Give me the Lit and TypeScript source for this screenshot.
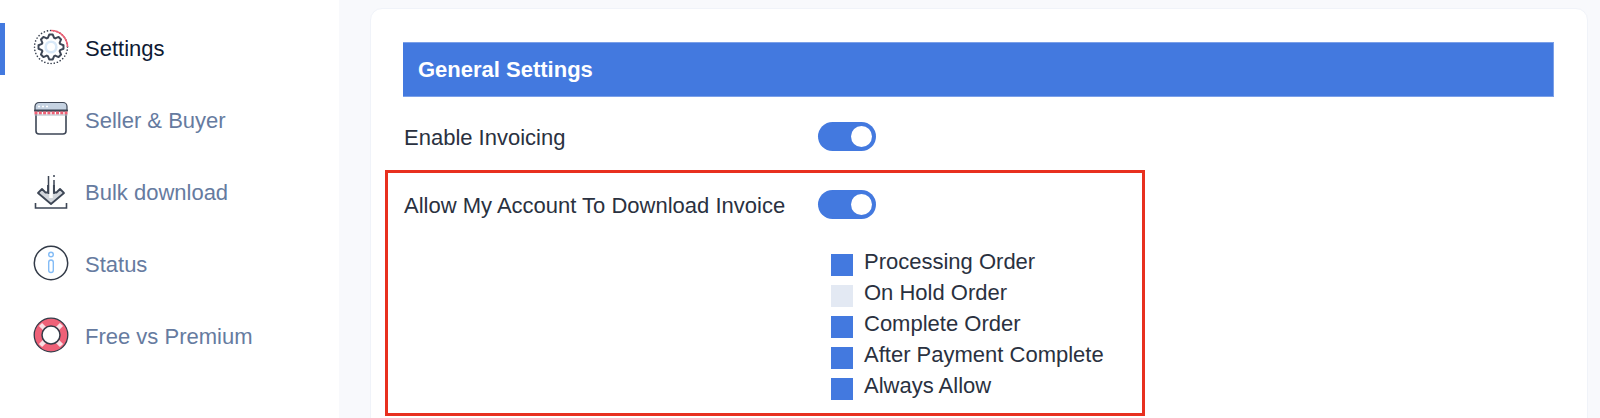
import { LitElement, html, css, svg } from "lit";
import { customElement } from "lit/decorators.js";

const dark = "#3d4655";
const gearPath = (() => {
  const teeth = 8, cx = 18, cy = 18, r1 = 9.6, r2 = 12.6;
  let d = "";
  for (let i = 0; i < teeth; i++) {
    const a = (i / teeth) * Math.PI * 2;
    const w = 0.2, s = 0.13;
    const pts = [[r1, a - w - s], [r2, a - w + 0.06], [r2, a + w - 0.06], [r1, a + w + s]];
    for (const [r, t] of pts) {
      d += `${d ? "L" : "M"}${(cx + r * Math.cos(t)).toFixed(2)} ${(cy + r * Math.sin(t)).toFixed(2)}`;
    }
  }
  return d + "Z";
})();

const icons = {
  gear: svg`<svg viewBox="0 0 36 36" width="36" height="36" fill="none">
    <circle cx="18" cy="18" r="16.5" stroke="#3a4250" stroke-width="1.6" stroke-linecap="round" stroke-dasharray="0.1 3.1"/>
    <path d="M18 1.5A16.5 16.5 0 0 1 34.5 18" stroke="#ee6075" stroke-width="1.6"/>
    <path d=${gearPath} stroke=${dark} stroke-width="2" stroke-linejoin="round" fill="#fff"/>
    <circle cx="18" cy="18" r="6.6" fill="#d9e9f8"/>
    <circle cx="18" cy="18" r="4" fill="#fff"/>
  </svg>`,
  shop: svg`<svg viewBox="0 0 36 36" width="36" height="36" fill="none">
    <path d="M3 12V30a3 3 0 0 0 3 3H30a3 3 0 0 0 3-3V12" fill="#fff" stroke=${dark} stroke-width="1.6"/>
    <path d="M2 10V5.500a4 4 0 0 1 4-4H30a4 4 0 0 1 4 4V10Z" fill="#c6d3e2" stroke=${dark} stroke-width="1.200"/>
    <path d="M5 5.500h2M9 5.500h2M13 5.500h2" stroke="#fff" stroke-width="1.600"/>
    <rect x="1" y="8.500" width="34" height="2" rx="1" fill=${dark}/>
    <path d="M1.500 12H34.500" stroke="#ee5f74" stroke-width="3" stroke-dasharray="3 1.300"/>
    <path d="M1.500 14H34.500" stroke="#aeb5c0" stroke-width="1"/>
  </svg>`,
  download: svg`<svg viewBox="0 0 36 36" width="36" height="36" fill="none">
    <path d="M15 12V19.500H12.500L9 16 5 20 18 31 31 20 27 16 23.500 19.500H21V12" fill="#d2d6dc" stroke=${dark} stroke-width="1.800" stroke-linejoin="round"/>
    <path d="M18 2V25" stroke="#fff" stroke-width="3.500"/>
    <path d="M15.500 3V21M21 2V4M21 7V21" stroke=${dark} stroke-width="1.500"/>
    <path d="M2.500 30V35H33.500V30" stroke=${dark} stroke-width="1.600"/>
  </svg>`,
  info: svg`<svg viewBox="0 0 36 36" width="36" height="36" fill="none">
    <circle cx="18" cy="18" r="16.700" stroke="#333b48" stroke-width="1.500"/>
    <circle cx="18" cy="9.500" r="2.300" stroke="#84bcf6" stroke-width="1.400"/>
    <rect x="15.700" y="15" width="4.600" height="12.500" rx="2.300" stroke="#84bcf6" stroke-width="1.400"/>
  </svg>`,
  ring: svg`<svg viewBox="0 0 36 36" width="36" height="36" fill="none">
    <circle cx="18" cy="18" r="16.800" fill="#ef6178"/>
    <path d="M7.500 7.500 13 13M28.500 7.500 23 13M7.500 28.500 13 23M28.500 28.500 23 23" stroke="#fbdfe4" stroke-width="4.500"/>
    <circle cx="18" cy="18" r="16.800" stroke="#333b48" stroke-width="1.300"/>
    <circle cx="18" cy="18" r="9" fill="#fff" stroke="#333b48" stroke-width="1.500"/>
  </svg>`,
};

const nav = [
  { label: "Settings", icon: icons.gear, active: true },
  { label: "Seller & Buyer", icon: icons.shop },
  { label: "Bulk download", icon: icons.download },
  { label: "Status", icon: icons.info },
  { label: "Free vs Premium", icon: icons.ring },
];

const options = [
  { label: "Processing Order", on: true },
  { label: "On Hold Order", on: false },
  { label: "Complete Order", on: true },
  { label: "After Payment Complete", on: true },
  { label: "Always Allow", on: true },
];

@customElement("app-root")
export class AppRoot extends LitElement {
  static styles = css`
    :host { display: block; width: 1600px; height: 418px; overflow: hidden; font-family: "Liberation Sans", Arial, sans-serif; background: #f8f9fc; }
    .page { display: flex; height: 418px; overflow: hidden; }
    .side { width: 339px; flex: none; box-sizing: border-box; background: #fff; padding-top: 23px; display: flex; flex-direction: column; gap: 20px; }
    .item { height: 52px; display: flex; align-items: center; gap: 16px; box-sizing: border-box; border-left: 5px solid transparent; padding-left: 28px; font-size: 22px; color: #667ba0; }
    .item.active { border-left-color: #4379df; color: #0e1a33; }
    .ico { width: 36px; height: 36px; flex: none; margin-top: -5px; }
    .ico svg { display: block; }
    .main { flex: 1; padding: 8px 12px 0 31px; min-width: 0; }
    .card { background: #fff; border: 1px solid #f0f3f9; border-radius: 12px; box-sizing: border-box; height: 500px; padding: 33px 33px 0 32px; }
    .head { height: 55px; box-sizing: border-box; background: #4379df; color: #fff; font-weight: 700; font-size: 22px; display: flex; align-items: center; padding: 1px 0 0 15px; border: 1px solid #7ba0e8; border-left: 0; }
    .row { display: flex; align-items: flex-start; }
    .label { width: 415px; flex: none; padding-left: 1px; box-sizing: border-box; font-size: 22px; line-height: 29px; color: #2a3140; }
    .first { margin-top: 25px; }
    .first .label { margin-top: 1px; }
    .box .label { margin-top: 1px; }
    .toggle { width: 58px; height: 29px; border-radius: 15px; background: #4379df; display: flex; justify-content: flex-end; align-items: center; padding-right: 4px; box-sizing: border-box; }
    .knob { width: 21px; height: 21px; border-radius: 50%; background: #fff; }
    .box { width: 760px; box-sizing: border-box; margin: 18px 0 0 -18px; border: 3.500px solid #e8301f; padding: 16.500px 14px 13.500px 15px; }
    .list { display: flex; flex-direction: column; gap: 9px; margin: 34px 0 0 428px; }
    .opt { display: flex; align-items: center; gap: 11px; height: 22px; font-size: 22px; color: #2a3140; }
    .check { width: 22px; height: 22px; flex: none; background: #4379df; }
    .check.off { background: #e3e9f3; }
    .text { margin-top: -6px; }
  `;

  render() {
    return html`<div class="page">
      <nav class="side">
        ${nav.map((n) => html`<div class="item ${n.active ? "active" : ""}"><span class="ico">${n.icon}</span><span>${n.label}</span></div>`)}
      </nav>
      <main class="main">
        <section class="card">
          <div class="head">General Settings</div>
          <div class="row first"><div class="label">Enable Invoicing</div><div class="toggle"><span class="knob"></span></div></div>
          <div class="box">
            <div class="row"><div class="label">Allow My Account To Download Invoice</div><div class="toggle"><span class="knob"></span></div></div>
            <div class="list">
              ${options.map((o) => html`<div class="opt"><span class="check ${o.on ? "" : "off"}"></span><span class="text">${o.label}</span></div>`)}
            </div>
          </div>
        </section>
      </main>
    </div>`;
  }
}
